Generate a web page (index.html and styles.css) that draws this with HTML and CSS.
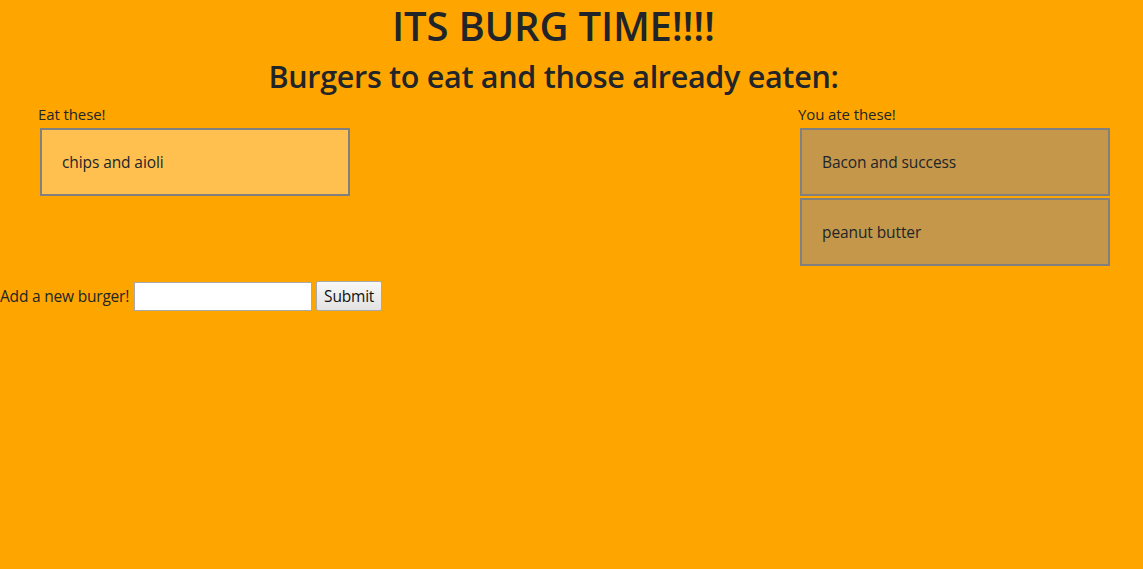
FILE: index.html
```html
<!DOCTYPE html>
<html lang="en">
<head>
<meta charset="utf-8">
<title>Burger</title>
<link rel="stylesheet" href="styles.css">
</head>
<body>
  <h1 class="title">ITS BURG TIME!!!!</h1>
  <h2 class="subtitle">Burgers to eat and those already eaten:</h2>
  <div class="columns">
    <div class="col">
      <div class="col-label">Eat these!</div>
      <div class="burger burger-fresh">chips and aioli</div>
    </div>
    <div class="col">
      <div class="col-label">You ate these!</div>
      <div class="burger burger-eaten">Bacon and success</div>
      <div class="burger burger-eaten">peanut butter</div>
    </div>
  </div>
  <form class="add-form">
    <label class="add-label" for="burger">Add a new burger!</label>
    <input class="add-input" id="burger" type="text">
    <button class="add-btn" type="button">Submit</button>
  </form>
</body>
</html>
```
FILE: styles.css
```css
html, body {
  margin: 0;
  padding: 0;
}
body {
  background: #ffa500;
  color: #212529;
  font-family: "Open Sans", "Noto Sans", sans-serif;
  font-size: 15px;
  min-height: 569px;
}
.title {
  margin: 0;
  padding: 2px 36px 0 0;
  text-align: center;
  font-size: 40px;
  font-weight: 600;
  line-height: 48px;
  letter-spacing: -0.2px;
}
.subtitle {
  margin: 4px 0 0;
  padding-right: 36px;
  text-align: center;
  font-size: 30.5px;
  font-weight: 600;
  line-height: 44px;
  letter-spacing: -0.3px;
}
.columns {
  display: flex;
  justify-content: space-between;
  padding: 7px 33px 0 38px;
}
.col {
  display: flex;
  flex-direction: column;
  width: 312px;
}
.col-label {
  font-size: 15px;
  line-height: 18px;
  margin-bottom: 5px;
  letter-spacing: -0.1px;
}
.burger {
  box-sizing: border-box;
  width: 310px;
  height: 68px;
  margin: 0 0 2px 2px;
  padding: 0 20px;
  display: flex;
  align-items: center;
  border: 2px solid #808080;
  font-size: 15.5px;
  letter-spacing: -0.1px;
}
.burger-fresh {
  background: #ffc050;
}
.burger-eaten {
  background: #c4974a;
}
.add-form {
  display: flex;
  align-items: center;
  margin-top: 13px;
  font-size: 15.5px;
}
.add-label {
  letter-spacing: -0.2px;
  margin-right: 5px;
}
.add-input {
  box-sizing: border-box;
  width: 178px;
  height: 29px;
  border: 1px solid #a9a9a9;
  background: #fff;
  margin: 0 4px 0 0;
}
.add-btn {
  box-sizing: border-box;
  height: 30px;
  width: 66px;
  padding: 0;
  border: 1px solid #a9a9a9;
  border-radius: 2px;
  background: linear-gradient(#f8f8f8, #e2e2e2);
  font-family: "Open Sans", "Noto Sans", sans-serif;
  font-size: 15.5px;
  color: #111;
  letter-spacing: -0.2px;
}
```
